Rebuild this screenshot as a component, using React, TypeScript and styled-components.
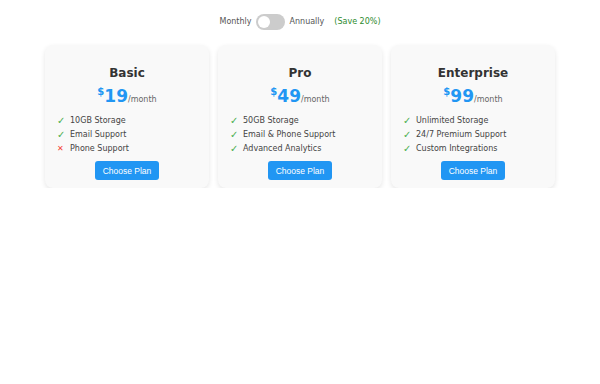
import React, { useState } from 'react';
import styled, { createGlobalStyle } from 'styled-components';

type Feature = { label: string; included: boolean };
type Plan = { name: string; monthly: number; features: Feature[] };

const plans: Plan[] = [
  {
    name: 'Basic',
    monthly: 19,
    features: [
      { label: '10GB Storage', included: true },
      { label: 'Email Support', included: true },
      { label: 'Phone Support', included: false },
    ],
  },
  {
    name: 'Pro',
    monthly: 49,
    features: [
      { label: '50GB Storage', included: true },
      { label: 'Email & Phone Support', included: true },
      { label: 'Advanced Analytics', included: true },
    ],
  },
  {
    name: 'Enterprise',
    monthly: 99,
    features: [
      { label: 'Unlimited Storage', included: true },
      { label: '24/7 Premium Support', included: true },
      { label: 'Custom Integrations', included: true },
    ],
  },
];

const App = () => {
  const [annual, setAnnual] = useState(false);

  return (
    <>
      <GlobalStyle />
      <Page>
        <ToggleRow>
          <span>Monthly</span>
          <Switch $on={annual} onClick={() => setAnnual(!annual)} />
          <span>Annually</span>
          <Save>(Save 20%)</Save>
        </ToggleRow>
        <Cards>
          {plans.map((plan) => (
            <Card key={plan.name}>
              <Title>{plan.name}</Title>
              <Price>
                <Currency>$</Currency>
                <Amount>
                  {annual ? Math.round(plan.monthly * 0.8) : plan.monthly}
                </Amount>
                <Period>/month</Period>
              </Price>
              <Features>
                {plan.features.map((f) => (
                  <FeatureItem key={f.label}>
                    <Mark $ok={f.included}>{f.included ? '✓' : '✕'}</Mark>
                    {f.label}
                  </FeatureItem>
                ))}
              </Features>
              <ChooseButton>Choose Plan</ChooseButton>
            </Card>
          ))}
        </Cards>
      </Page>
    </>
  );
};

export default App;

const GlobalStyle = createGlobalStyle`
  body {
    margin: 0;
    background: #fff;
    font-family: "DejaVu Sans", Verdana, sans-serif;
  }
`;

const Page = styled.div`
  display: flex;
  flex-direction: column;
  align-items: center;
  padding-top: 13px;
`;

const ToggleRow = styled.div`
  display: flex;
  align-items: center;
  font-size: 8px;
  color: #555;
  height: 17px;
`;

const Switch = styled.button<{ $on: boolean }>`
  position: relative;
  width: 29px;
  height: 16px;
  margin: 0 5px 0 4px;
  padding: 0;
  border: none;
  border-radius: 8px;
  background: ${(p) => (p.$on ? '#2196f3' : '#ccc')};
  cursor: pointer;

  &::after {
    content: '';
    position: absolute;
    top: 2px;
    left: ${(p) => (p.$on ? '15px' : '2px')};
    width: 12px;
    height: 12px;
    border-radius: 50%;
    background: #fff;
  }
`;

const Save = styled.span`
  color: #2e8b2e;
  margin-left: 10px;
`;

const Cards = styled.div`
  display: flex;
  gap: 9px;
  margin-top: 15px;
`;

const Card = styled.div`
  width: 164px;
  box-sizing: border-box;
  padding: 21px 12px 8px;
  background: #f9f9f9;
  border-radius: 8px;
  box-shadow: 0 2px 5px rgba(0, 0, 0, 0.1);
  display: flex;
  flex-direction: column;
  align-items: center;
`;

const Title = styled.h3`
  margin: 0;
  font-size: 12px;
  font-weight: bold;
  color: #333;
`;

const Price = styled.div`
  margin-top: 6px;
  display: flex;
  align-items: baseline;
  color: #2196f3;
`;

const Currency = styled.span`
  font-size: 10px;
  font-weight: bold;
  align-self: flex-start;
`;

const Amount = styled.span`
  font-size: 17px;
  font-weight: bold;
`;

const Period = styled.span`
  font-size: 8px;
  color: #666;
`;

const Features = styled.ul`
  list-style: none;
  margin: 7px 0 0;
  padding: 0;
  align-self: stretch;
`;

const FeatureItem = styled.li`
  display: flex;
  align-items: center;
  height: 14px;
  font-size: 8px;
  color: #444;
`;

const Mark = styled.span<{ $ok: boolean }>`
  width: 13px;
  font-size: ${(p) => (p.$ok ? '10px' : '8px')};
  color: ${(p) => (p.$ok ? '#4caf50' : '#f44336')};
`;

const ChooseButton = styled.button`
  margin-top: 6px;
  padding: 0 8px;
  border: none;
  border-radius: 3px;
  background: #2196f3;
  color: #fff;
  font-family: "Liberation Sans", Arial, sans-serif;
  font-size: 8.5px;
  height: 19px;
  cursor: pointer;
`;
